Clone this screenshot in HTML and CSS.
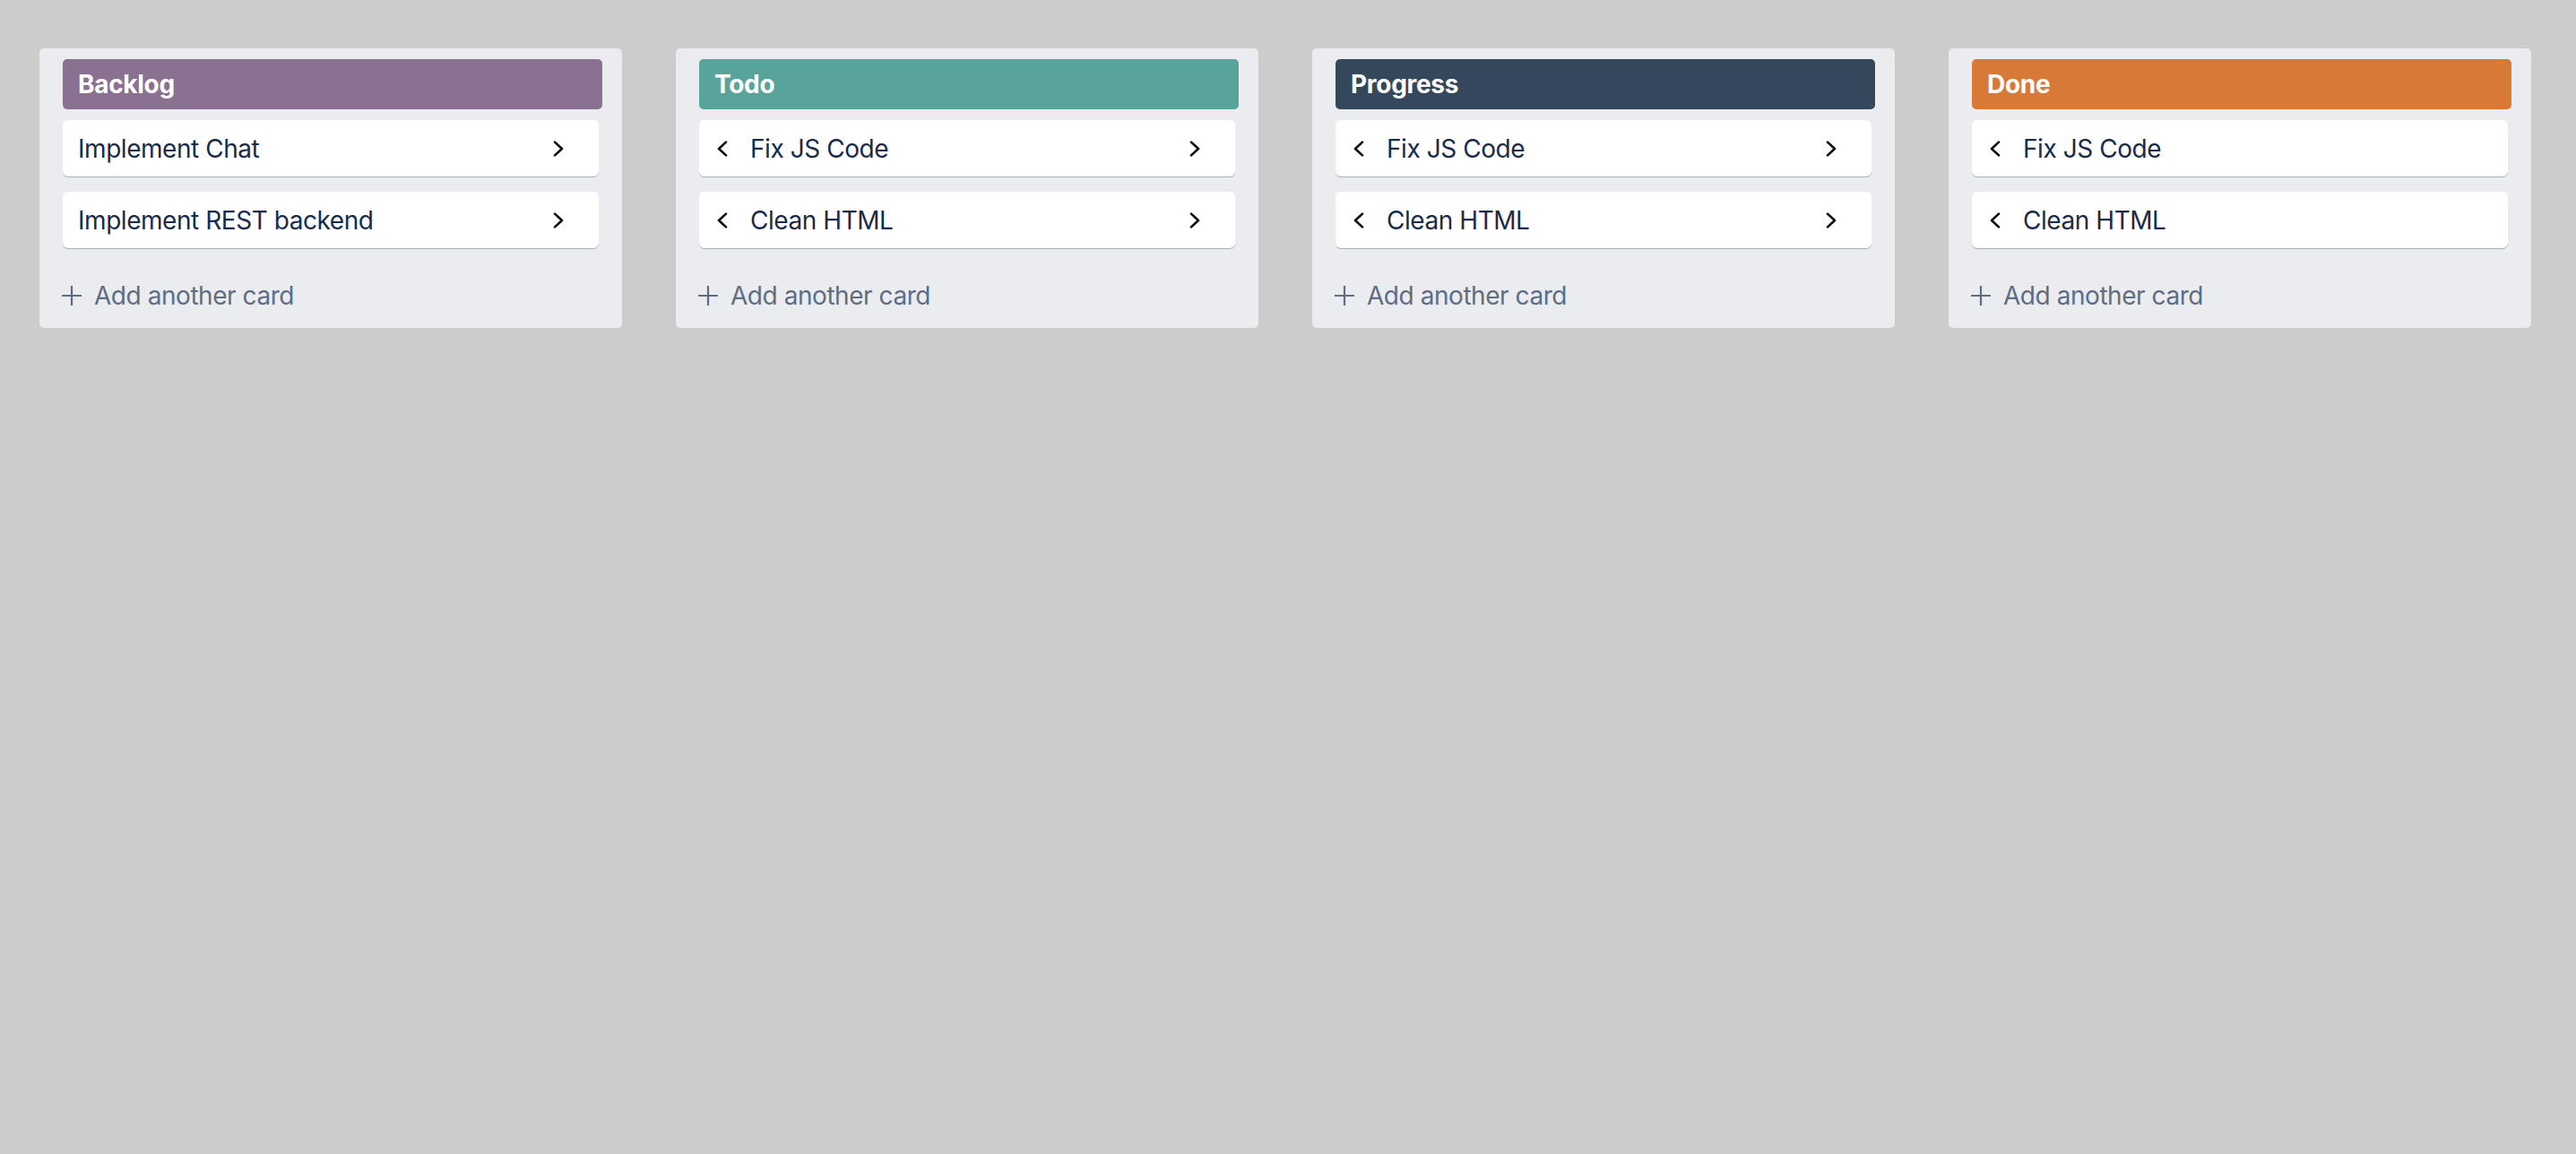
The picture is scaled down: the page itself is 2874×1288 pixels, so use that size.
FILE: index.html
```html
<!DOCTYPE html>
<html lang="en">
<head>
<meta charset="utf-8">
<title>Board</title>
<link rel="stylesheet" href="styles.css">
</head>
<body>
<main class="board">
  <section class="list">
    <h2 class="list-title title-backlog">Backlog</h2>
    <div class="card">
      <span class="card-text">Implement Chat</span>
      <svg class="chev chev-right" viewBox="0 0 12 18"><polyline points="2,1.6 10,9 2,16.4"/></svg>
    </div>
    <div class="card">
      <span class="card-text">Implement REST backend</span>
      <svg class="chev chev-right" viewBox="0 0 12 18"><polyline points="2,1.6 10,9 2,16.4"/></svg>
    </div>
    <div class="add">
      <svg class="plus" viewBox="0 0 24 24"><path d="M12 1v22M1 12h22"/></svg>
      <span>Add another card</span>
    </div>
  </section>

  <section class="list">
    <h2 class="list-title title-todo">Todo</h2>
    <div class="card">
      <svg class="chev chev-left" viewBox="0 0 12 18"><polyline points="10,1.6 2,9 10,16.4"/></svg>
      <span class="card-text">Fix JS Code</span>
      <svg class="chev chev-right" viewBox="0 0 12 18"><polyline points="2,1.6 10,9 2,16.4"/></svg>
    </div>
    <div class="card">
      <svg class="chev chev-left" viewBox="0 0 12 18"><polyline points="10,1.6 2,9 10,16.4"/></svg>
      <span class="card-text">Clean HTML</span>
      <svg class="chev chev-right" viewBox="0 0 12 18"><polyline points="2,1.6 10,9 2,16.4"/></svg>
    </div>
    <div class="add">
      <svg class="plus" viewBox="0 0 24 24"><path d="M12 1v22M1 12h22"/></svg>
      <span>Add another card</span>
    </div>
  </section>

  <section class="list">
    <h2 class="list-title title-progress">Progress</h2>
    <div class="card">
      <svg class="chev chev-left" viewBox="0 0 12 18"><polyline points="10,1.6 2,9 10,16.4"/></svg>
      <span class="card-text">Fix JS Code</span>
      <svg class="chev chev-right" viewBox="0 0 12 18"><polyline points="2,1.6 10,9 2,16.4"/></svg>
    </div>
    <div class="card">
      <svg class="chev chev-left" viewBox="0 0 12 18"><polyline points="10,1.6 2,9 10,16.4"/></svg>
      <span class="card-text">Clean HTML</span>
      <svg class="chev chev-right" viewBox="0 0 12 18"><polyline points="2,1.6 10,9 2,16.4"/></svg>
    </div>
    <div class="add">
      <svg class="plus" viewBox="0 0 24 24"><path d="M12 1v22M1 12h22"/></svg>
      <span>Add another card</span>
    </div>
  </section>

  <section class="list">
    <h2 class="list-title title-done">Done</h2>
    <div class="card">
      <svg class="chev chev-left" viewBox="0 0 12 18"><polyline points="10,1.6 2,9 10,16.4"/></svg>
      <span class="card-text">Fix JS Code</span>
    </div>
    <div class="card">
      <svg class="chev chev-left" viewBox="0 0 12 18"><polyline points="10,1.6 2,9 10,16.4"/></svg>
      <span class="card-text">Clean HTML</span>
    </div>
    <div class="add">
      <svg class="plus" viewBox="0 0 24 24"><path d="M12 1v22M1 12h22"/></svg>
      <span>Add another card</span>
    </div>
  </section>
</main>
</body>
</html>
```

FILE: styles.css
```css
* { box-sizing: border-box; }

html, body {
  margin: 0;
  height: 100%;
}

body {
  background: #cccccc;
  font-family: Inter, "Noto Sans", "Liberation Sans", sans-serif;
  color: #172b4d;
}

.board {
  display: flex;
  align-items: flex-start;
  gap: 60px;
  padding: 54px 0 0 44px;
}

.list {
  width: 650px;
  flex: none;
  background: #ebecf0;
  border-radius: 5px;
  padding: 12px 22px 12px 26px;
  display: flex;
  flex-direction: column;
}

.list-title {
  margin: 0 0 12px 0;
  height: 56px;
  display: flex;
  align-items: center;
  padding: 0 17px;
  border-radius: 5px;
  color: #ffffff;
  font-size: 28px;
  font-weight: 700;
  letter-spacing: -0.3px;
}

.title-backlog { background: #8a7091; }
.title-todo { background: #58a49b; }
.title-progress { background: #35475a; }
.title-done { background: #d97938; }

.card {
  width: 598px;
  height: 63px;
  margin-bottom: 17px;
  background: #ffffff;
  border-radius: 6px;
  box-shadow: 0 1px 0 rgba(9, 30, 66, 0.3);
  display: flex;
  align-items: center;
  padding: 0 39px 0 17px;
  font-size: 28px;
  letter-spacing: -0.45px;
}

.card-text {
  flex: 1;
  white-space: nowrap;
}

.chev {
  width: 12px;
  height: 18px;
  flex: none;
  fill: none;
  stroke: #0b0b0b;
  stroke-width: 2.6;
  stroke-linecap: round;
  stroke-linejoin: round;
}

.chev-left {
  margin: 0 25px 0 3px;
}

.add {
  margin-top: 12px;
  height: 48px;
  display: flex;
  align-items: center;
  margin-left: -2px;
  color: #5e6c84;
  font-size: 28px;
  letter-spacing: -0.45px;
}

.plus {
  width: 24px;
  height: 24px;
  flex: none;
  margin-right: 13px;
  fill: none;
  stroke: #5e6c84;
  stroke-width: 2.2;
}
```
